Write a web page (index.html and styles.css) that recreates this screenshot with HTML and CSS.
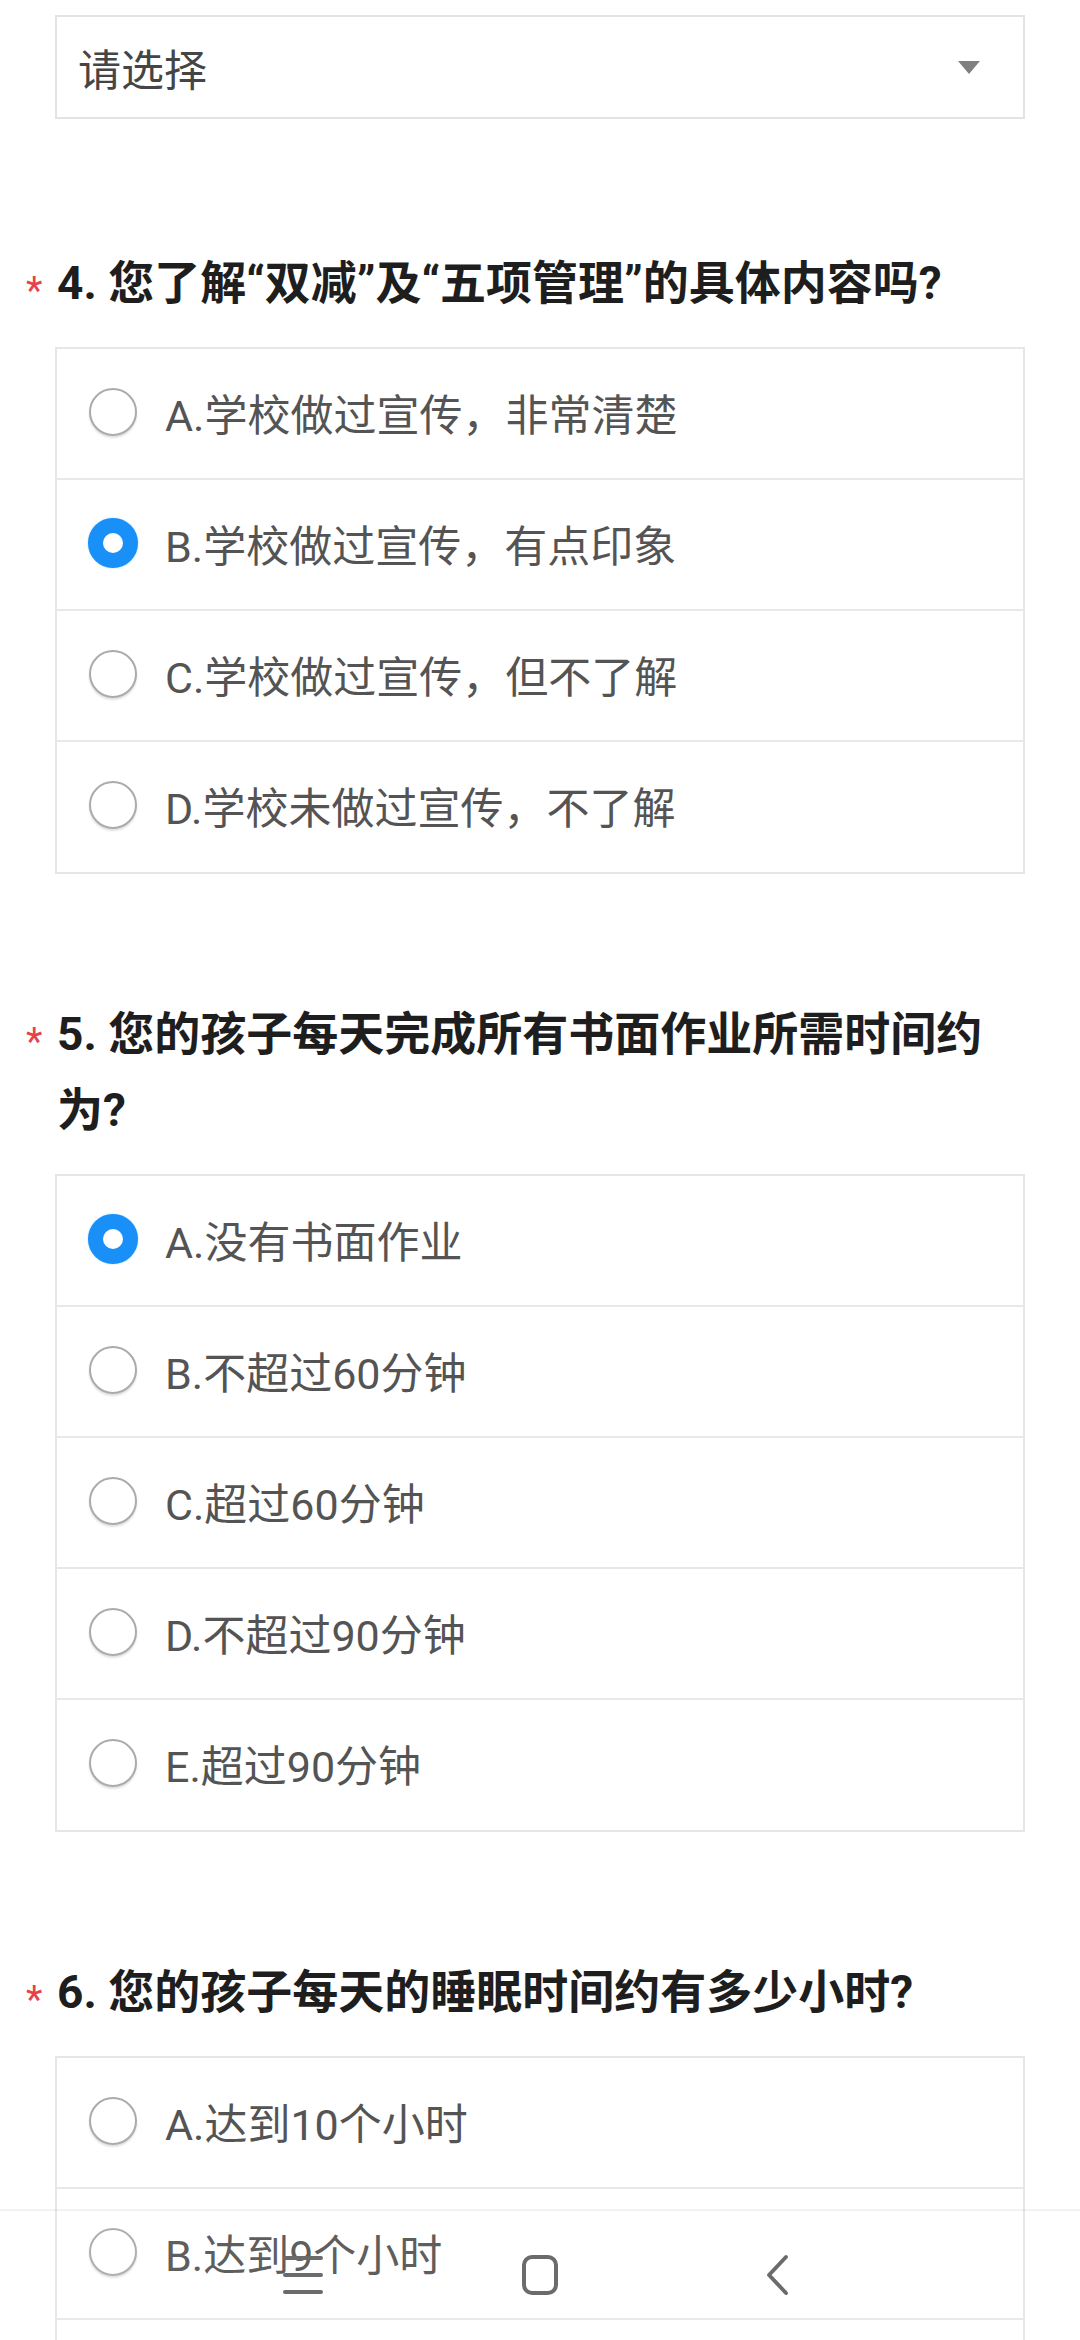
FILE: index.html
```html
<!DOCTYPE html>
<html lang="zh-CN">
<head>
<meta charset="utf-8">
<title>问卷</title>
<link rel="stylesheet" href="styles.css">
</head>
<body>
<main class="page">
  <div class="select">
    <span class="select-text">请选择</span>
    <span class="select-arrow"></span>
  </div>

  <section class="question">
    <h2 class="q-title"><span class="req">*</span>4. 您了解“双减”及“五项管理”的具体内容吗?</h2>
    <div class="options">
      <div class="option"><span class="radio"></span><span class="opt-text">A.学校做过宣传，非常清楚</span></div>
      <div class="option"><span class="radio checked"></span><span class="opt-text">B.学校做过宣传，有点印象</span></div>
      <div class="option"><span class="radio"></span><span class="opt-text">C.学校做过宣传，但不了解</span></div>
      <div class="option"><span class="radio"></span><span class="opt-text">D.学校未做过宣传，不了解</span></div>
    </div>
  </section>

  <section class="question">
    <h2 class="q-title"><span class="req">*</span>5. 您的孩子每天完成所有书面作业所需时间约为?</h2>
    <div class="options">
      <div class="option"><span class="radio checked"></span><span class="opt-text">A.没有书面作业</span></div>
      <div class="option"><span class="radio"></span><span class="opt-text">B.不超过60分钟</span></div>
      <div class="option"><span class="radio"></span><span class="opt-text">C.超过60分钟</span></div>
      <div class="option"><span class="radio"></span><span class="opt-text">D.不超过90分钟</span></div>
      <div class="option"><span class="radio"></span><span class="opt-text">E.超过90分钟</span></div>
    </div>
  </section>

  <section class="question">
    <h2 class="q-title"><span class="req">*</span>6. 您的孩子每天的睡眠时间约有多少小时?</h2>
    <div class="options">
      <div class="option"><span class="radio"></span><span class="opt-text">A.达到10个小时</span></div>
      <div class="option"><span class="radio"></span><span class="opt-text">B.达到9个小时</span></div>
      <div class="option"><span class="radio"></span><span class="opt-text">C.达到8个小时</span></div>
    </div>
  </section>
</main>

<nav class="navbar">
  <div class="nav-slot">
    <svg width="40" height="40" viewBox="0 0 40 40">
      <path d="M2 3H38M2 20H38M2 37H38" stroke="#6b6b6b" stroke-width="4" stroke-linecap="round" fill="none"/>
    </svg>
  </div>
  <div class="nav-slot">
    <svg width="40" height="42" viewBox="0 0 40 42">
      <rect x="4" y="3" width="32" height="36" rx="8" ry="8" stroke="#6b6b6b" stroke-width="4" fill="none"/>
    </svg>
  </div>
  <div class="nav-slot">
    <svg width="30" height="42" viewBox="0 0 30 42">
      <path d="M24 3L7 21L24 39" stroke="#6b6b6b" stroke-width="4" stroke-linecap="round" stroke-linejoin="round" fill="none"/>
    </svg>
  </div>
</nav>
</body>
</html>
```

FILE: styles.css
```css
* {
  box-sizing: border-box;
}

html, body {
  margin: 0;
  padding: 0;
  background: #ffffff;
}

body {
  font-family: Roboto, "Noto Sans CJK SC", sans-serif;
  overflow: hidden;
  height: 2340px;
}

.page {
  padding: 15px 55px 0 55px;
}

.select {
  height: 104px;
  border: 2px solid #e3e3e3;
  display: flex;
  align-items: center;
  justify-content: space-between;
  padding: 0 43px 0 21px;
}

.select-text {
  font-size: 43px;
  color: #454545;
}

.select-arrow {
  width: 0;
  height: 0;
  border-left: 11px solid transparent;
  border-right: 11px solid transparent;
  border-top: 13px solid #808080;
}

.question {
  margin-top: 122px;
}

.select + .question {
  margin-top: 126px;
}

.q-title {
  position: relative;
  margin: 0 0 26px 0;
  padding: 0 30px 0 2px;
  font-size: 46px;
  line-height: 76px;
  font-weight: 700;
  color: #1e1e1e;
}

.req {
  position: absolute;
  left: -29px;
  top: 8px;
  font-size: 38px;
  font-weight: 400;
  color: #e5434c;
}

.options {
  border: 2px solid #e6e6e6;
}

.option {
  height: 131px;
  display: flex;
  align-items: center;
  padding-left: 32px;
  gap: 28px;
  border-bottom: 2px solid #e8e8e8;
}

.option:last-child {
  height: 130px;
  border-bottom: none;
}

.radio {
  flex: none;
  width: 48px;
  height: 48px;
  border-radius: 50%;
  border: 2px solid #ababab;
  background: #ffffff;
  box-shadow: 0 2px 2px rgba(0, 0, 0, 0.12);
  margin-top: -4px;
}

.radio.checked {
  width: 50px;
  height: 50px;
  margin-left: -1px;
  margin-right: -1px;
  border: 15px solid #1890f7;
  box-shadow: 0 0 2px rgba(24, 144, 247, 0.4);
}

.opt-text {
  font-size: 43px;
  color: #545454;
  margin-top: -4px;
}

.navbar {
  position: fixed;
  left: 0;
  right: 0;
  bottom: 0;
  height: 131px;
  background: rgba(255, 255, 255, 0.06);
  border-top: 2px solid rgba(0, 0, 0, 0.05);
  display: flex;
  align-items: center;
  justify-content: center;
  padding-bottom: 2px;
}

.nav-slot {
  width: 237px;
  display: flex;
  justify-content: center;
  align-items: center;
}

.nav-slot svg {
  display: block;
}
```
